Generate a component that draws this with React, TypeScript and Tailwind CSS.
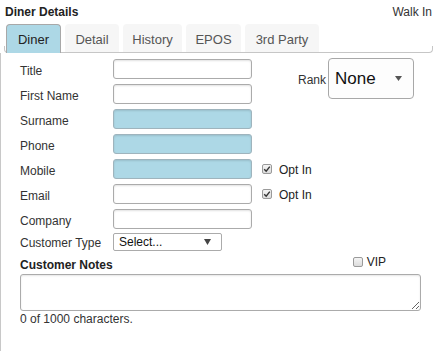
import React from 'react';

const tabs = [
  { label: 'Diner', w: 'w-[55px]', active: true },
  { label: 'Detail', w: 'w-[54px]' },
  { label: 'History', w: 'w-[59px]' },
  { label: 'EPOS', w: 'w-[55px]' },
  { label: '3rd Party', w: 'w-[74px]' },
];

function Check({ checked }: { checked?: boolean }) {
  return (
    <span className="w-[10px] h-[10px] border border-[#9a9a9a] rounded-[2px] bg-gradient-to-b from-[#f4f4f4] to-[#dcdcdc] flex items-center justify-center">
      {checked && (
        <svg width="8" height="8" viewBox="0 0 8 8">
          <path d="M1.2 4.2 L3.2 6.2 L6.8 1.6" fill="none" stroke="#333" strokeWidth="1.4" />
        </svg>
      )}
    </span>
  );
}

function Field({ label, blue, extra }: { label: string; blue?: boolean; extra?: React.ReactNode }) {
  return (
    <div className="flex items-center h-[20px]">
      <span className="w-[93px] pt-[3px]">{label}</span>
      <div
        className={
          blue
            ? 'w-[139px] h-[20px] rounded-[3px] border border-[#9fb4bd] bg-[#add8e6] shadow-[inset_0_1px_2px_rgba(0,0,0,0.12)]'
            : 'w-[139px] h-[20px] rounded-[3px] border border-[#ababab] bg-white shadow-[inset_0_1px_2px_rgba(0,0,0,0.12)]'
        }
      />
      {extra}
    </div>
  );
}

function OptIn() {
  return (
    <div className="flex items-center ml-[10px] gap-[7px]">
      <Check checked />
      <span className="text-[#222] pt-[1px]">Opt In</span>
    </div>
  );
}

export default function App() {
  return (
    <div className="w-[442px] h-[351px] bg-white overflow-hidden flex flex-col font-['Liberation_Sans',Arial,sans-serif] text-[12px] text-[#333]">
      {/* header */}
      <div className="h-[24px] flex items-center justify-between pl-[5px] pr-[10px] pb-[1px]">
        <span className="font-bold text-[#222]">Diner Details</span>
        <span className="text-[#333]">Walk In</span>
      </div>

      {/* tabs */}
      <div className="relative h-[29px] flex gap-[4px] pl-[6px]">
        <div className="absolute left-[4px] w-[429px] bottom-0 h-[7px] border-l border-r border-b border-[#c6c6c6] rounded-b-[4px]" />
        {tabs.map(t => (
          <div
            key={t.label}
            className={
              t.active
                ? `relative ${t.w} h-[29px] pt-[2px] rounded-t-[4px] border border-b-0 border-[#a8a8a8] bg-[#add8e6] text-[13px] text-[#222] flex items-center justify-center`
                : `relative ${t.w} h-[28px] pt-[3px] rounded-t-[4px] bg-[#f6f6f6] text-[13px] text-[#555] flex items-center justify-center`
            }
          >
            {t.label}
          </div>
        ))}
      </div>

      {/* body */}
      <div className="flex-1 border-l border-[#c8c8c8] pl-[19px] pt-[6px] flex flex-col">
        <div className="flex items-start">
          <div className="flex flex-col gap-[5px]">
            <Field label="Title" />
            <Field label="First Name" />
          </div>
          <div className="flex items-center ml-[46px] -mt-[1px] gap-[2px]">
            <span className="text-[#333] pt-[2px]">Rank</span>
            <div className="w-[86px] h-[41px] rounded-[4px] border border-[#a8a8a8] bg-[#fdfdfd] flex items-center justify-between pl-[6px] pr-[11px]">
              <span className="text-[17px] text-[#111]">None</span>
              <svg width="7" height="5" viewBox="0 0 7 5">
                <path d="M0 0 H7 L3.5 5 Z" fill="#555" />
              </svg>
            </div>
          </div>
        </div>

        <div className="flex flex-col gap-[5px] mt-[5px]">
          <Field label="Surname" blue />
          <Field label="Phone" blue />
          <Field label="Mobile" blue extra={<OptIn />} />
          <Field label="Email" extra={<OptIn />} />
          <Field label="Company" />
        </div>

        <div className="flex items-center h-[18px] mt-[4px]">
          <span className="w-[93px] pt-[2px]">Customer Type</span>
          <div className="w-[109px] h-[18px] rounded-[2px] border border-[#ababab] bg-white flex items-center justify-between pl-[5px] pr-[10px]">
            <span className="text-[#111]">Select...</span>
            <svg width="7" height="6" viewBox="0 0 7 6">
              <path d="M0 0 H7 L3.5 6 Z" fill="#444" />
            </svg>
          </div>
        </div>

        <div className="flex items-start h-[17px] mt-[5px] w-[401px]">
          <span className="font-bold text-[#222]">Customer Notes</span>
          <div className="flex items-center ml-auto mr-[35px] gap-[4px] -mt-[3px]">
            <Check />
            <span className="text-[#222]">VIP</span>
          </div>
        </div>

        <textarea className="w-[401px] h-[37px] mt-[1px] rounded-[3px] border border-[#ababab] bg-white block shadow-[inset_0_1px_2px_rgba(0,0,0,0.1)]" />

        <div className="text-[#333] leading-[14px] mt-[1px]">0 of 1000 characters.</div>
      </div>
    </div>
  );
}
